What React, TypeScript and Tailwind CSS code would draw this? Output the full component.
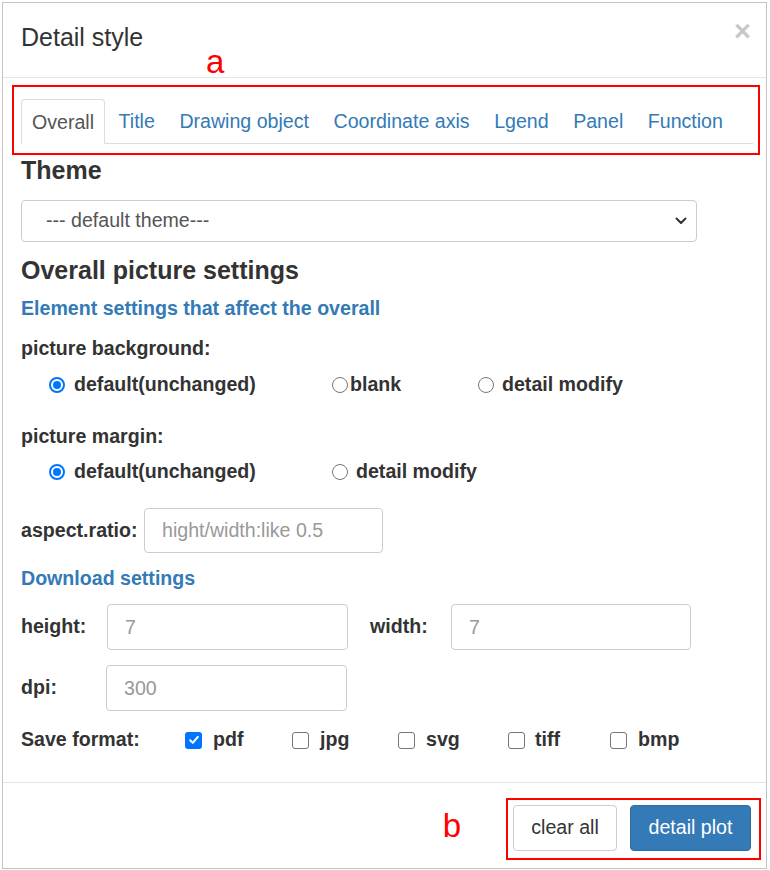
import React from 'react';

const tabs = ['Overall', 'Title', 'Drawing object', 'Coordinate axis', 'Lgend', 'Panel', 'Function'];

const Radio: React.FC<{ checked?: boolean }> = ({ checked }) =>
  checked ? (
    <span className="flex h-[16px] w-[16px] shrink-0 items-center justify-center rounded-full border-2 border-[#0075ff] bg-white">
      <span className="h-[8px] w-[8px] rounded-full bg-[#0075ff]" />
    </span>
  ) : (
    <span className="h-[16px] w-[16px] shrink-0 rounded-full border border-[#767676] bg-white" />
  );

const Checkbox: React.FC<{ checked?: boolean }> = ({ checked }) =>
  checked ? (
    <span className="flex h-[17px] w-[17px] shrink-0 items-center justify-center rounded-[3px] bg-[#0075ff]">
      <svg width="12" height="12" viewBox="0 0 12 12" fill="none">
        <path d="M2.2 6.3 L4.8 8.9 L9.8 2.8" stroke="white" strokeWidth="2" strokeLinecap="round" strokeLinejoin="round" />
      </svg>
    </span>
  ) : (
    <span className="h-[17px] w-[17px] shrink-0 rounded-[3px] border border-[#767676] bg-white" />
  );

const Field: React.FC<{ placeholder: string; width: string }> = ({ placeholder, width }) => (
  <input
    readOnly
    placeholder={placeholder}
    className={`${width} h-[46px] rounded-[4px] border border-[#ccc] bg-white pl-[17px] text-[19.6px] font-normal text-[#555] outline-none placeholder:text-[#999]`}
  />
);

export default function App() {
  return (
    <div className="h-[870px] w-[770px] bg-white font-['Liberation_Sans',Arial,sans-serif] text-[#333]">
      <div className="relative ml-[2px] mt-[2px] flex h-[867px] w-[765px] flex-col border border-[#c4c4c4] bg-white">
        {/* header */}
        <div className="flex h-[75px] shrink-0 items-start justify-between border-b border-[#e5e5e5] pl-[18px] pr-[15px]">
          <h4 className="pt-[20px] text-[25px] leading-[28px]">Detail style</h4>
          <span className="mt-[14px] h-[29px] text-[29px] font-bold leading-[29px] text-[#c8c8c8]">×</span>
        </div>
        <span className="absolute left-[203px] top-[41px] text-[33px] leading-[36px] text-[#ff0000]">a</span>

        {/* body */}
        <div className="flex flex-1 flex-col">
          <div className="ml-[9px] mt-[7px] h-[70px] w-[748px] border-2 border-[#ff0000] pl-[7px] pr-[5px] pt-[12px]">
            <ul className="flex border-b border-[#ddd]">
              {tabs.map((t, i) => (
                <li
                  key={t}
                  className={
                    i === 0
                      ? '-mb-px mr-[2.5px] flex h-[45px] items-center rounded-t-[4px] border border-b-white border-[#ddd] bg-white px-[10px] pt-[2px] text-[19.6px] text-[#555]'
                      : 'mr-[2.5px] flex h-[44px] items-center px-[11px] pt-[2px] text-[19.6px] text-[#337ab7]'
                  }
                >
                  {t}
                </li>
              ))}
            </ul>
          </div>

          <div className="flex flex-col pl-[18px]">
            <h4 className="h-[30px] text-[25px] font-bold leading-[30px]">Theme</h4>
            <div className="mt-[15px] flex h-[42px] w-[676px] items-center justify-between rounded-[4px] border border-[#ccc] pl-[24px] pr-[9px] text-[19.6px] text-[#555]">
              <span>--- default theme---</span>
              <svg width="12" height="8" viewBox="0 0 12 8" fill="none">
                <path d="M1.5 1.5 L6 6 L10.5 1.5" stroke="#333" strokeWidth="2" strokeLinecap="round" strokeLinejoin="round" />
              </svg>
            </div>

            <h4 className="mt-[12px] h-[32px] text-[25px] font-bold leading-[32px]">Overall picture settings</h4>
            <h5 className="mt-[8px] h-[28px] text-[19.6px] font-bold leading-[28px] text-[#337ab7]">
              Element settings that affect the overall
            </h5>

            <div className="mt-[12px] h-[28px] text-[19.6px] font-bold leading-[28px]">picture background:</div>
            <div className="mt-[9px] flex h-[28px] items-center pl-[28px] text-[19.6px] font-bold">
              <div className="flex w-[283px] items-center gap-[9px]">
                <Radio checked />
                <span>default(unchanged)</span>
              </div>
              <div className="flex w-[146px] items-center gap-[2px]">
                <Radio />
                <span>blank</span>
              </div>
              <div className="flex items-center gap-[8px]">
                <Radio />
                <span>detail modify</span>
              </div>
            </div>

            <div className="mt-[23px] h-[28px] text-[19.6px] font-bold leading-[28px]">picture margin:</div>
            <div className="mt-[8px] flex h-[28px] items-center pl-[28px] text-[19.6px] font-bold">
              <div className="flex w-[283px] items-center gap-[9px]">
                <Radio checked />
                <span>default(unchanged)</span>
              </div>
              <div className="flex items-center gap-[8px]">
                <Radio />
                <span>detail modify</span>
              </div>
            </div>

            <div className="mt-[22px] flex h-[45px] items-center text-[19.6px] font-bold">
              <span className="w-[123px]">aspect.ratio:</span>
              <input
                readOnly
                placeholder="hight/width:like 0.5"
                className="h-[45px] w-[239px] rounded-[4px] border border-[#ccc] pl-[17px] text-[19.6px] font-normal outline-none placeholder:text-[#999]"
              />
            </div>

            <h5 className="mt-[11px] h-[28px] text-[19.6px] font-bold leading-[28px] text-[#337ab7]">Download settings</h5>

            <div className="mt-[12px] flex h-[46px] items-center text-[19.6px] font-bold">
              <span className="w-[86px]">height:</span>
              <Field placeholder="7" width="w-[241px]" />
              <span className="ml-[22px] w-[81px]">width:</span>
              <Field placeholder="7" width="w-[240px]" />
            </div>

            <div className="mt-[15px] flex h-[46px] items-center text-[19.6px] font-bold">
              <span className="w-[85px]">dpi:</span>
              <Field placeholder="300" width="w-[241px]" />
            </div>

            <div className="mt-[15px] flex h-[28px] items-center text-[19.6px] font-bold">
              <span className="w-[164px]">Save format:</span>
              <div className="flex w-[107px] items-center gap-[11px]">
                <Checkbox checked />
                <span>pdf</span>
              </div>
              <div className="flex w-[106px] items-center gap-[11px]">
                <Checkbox />
                <span>jpg</span>
              </div>
              <div className="flex w-[110px] items-center gap-[11px]">
                <Checkbox />
                <span>svg</span>
              </div>
              <div className="flex w-[102px] items-center gap-[10px]">
                <Checkbox />
                <span>tiff</span>
              </div>
              <div className="flex items-center gap-[11px]">
                <Checkbox />
                <span>bmp</span>
              </div>
            </div>
          </div>
        </div>

        {/* footer */}
        <div className="flex h-[86px] shrink-0 items-start justify-end border-t border-[#e5e5e5] pr-[5px] pt-[15px]">
          <span className="mr-[45px] mt-[8px] text-[33px] leading-[40px] text-[#ff0000]">b</span>
          <div className="flex h-[62px] w-[255px] items-start gap-[13px] border-2 border-[#ff0000] pl-[5px] pt-[5px]">
            <button className="h-[46px] w-[104px] rounded-[4px] border border-[#ccc] bg-white text-[19.6px] text-[#333]">
              clear all
            </button>
            <button className="h-[46px] w-[121px] rounded-[4px] border border-[#2e6da4] bg-[#337ab7] text-[19.6px] text-white">
              detail plot
            </button>
          </div>
        </div>
      </div>
    </div>
  );
}
